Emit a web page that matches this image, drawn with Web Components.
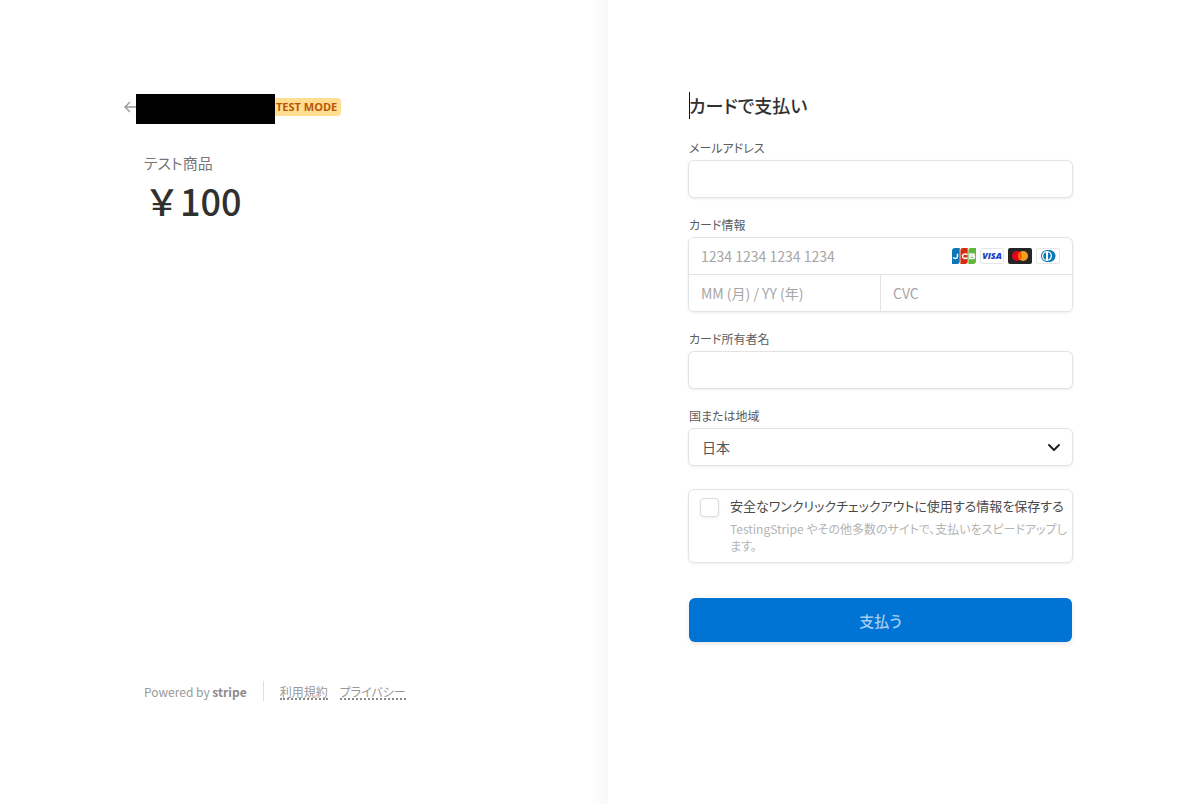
<!DOCTYPE html>
<html lang="ja">
<head>
<meta charset="utf-8">
<meta name="viewport" content="width=device-width, initial-scale=1">
<title>カードで支払い</title>
<style>
  body {
    margin: 0;
    background: #fff;
    color: #303030;
    font-family: "Noto Sans CJK JP", sans-serif;
    font-feature-settings: "palt";
    --line: #e3e3e3;
    --muted: #999;
    --label: #5c5c5c;
    --latin: "Open Sans", "Noto Sans CJK JP", sans-serif;
    --field-shadow: 0 1px 3px rgba(0, 0, 0, .08);
  }
</style>
</head>
<body>
<checkout-page>
  <order-summary slot="summary" product="テスト商品" price="￥100"></order-summary>
  <payment-form slot="payment">
    <text-field label="メールアドレス" type="email"></text-field>
    <card-field label="カード情報"></card-field>
    <text-field label="カード所有者名" type="text"></text-field>
    <country-field label="国または地域"></country-field>
    <save-info>
      安全なワンクリックチェックアウトに使用する情報を保存する
      <span slot="detail">TestingStripe やその他多数のサイトで、支払いをスピードアップします。</span>
    </save-info>
    <pay-button>支払う</pay-button>
  </payment-form>
</checkout-page>

<script>
const define = (name, render) => customElements.define(name, class extends HTMLElement {
  connectedCallback() {
    if (this.shadowRoot) return;
    const template = document.createElement('template');
    template.innerHTML = '<style>*{box-sizing:border-box}</style>' + render(this);
    this.attachShadow({ mode: 'open' }).append(template.content.cloneNode(true));
  }
});

define('checkout-page', () => `
  <style>
    :host { display: grid; grid-template-columns: 608fr 592fr; min-height: 100vh; }
    .left { display: flex; padding: 94px 84px 103px 144px; background: linear-gradient(to left, #f8f8f8, #fff 18px); }
    .right { padding: 92px 127px 80px 80px; }
    @media (max-width: 800px) {
      :host { grid-template-columns: 1fr; }
      .left, .right { padding: 32px; }
    }
  </style>
  <section class="left"><slot name="summary"></slot></section>
  <main class="right"><slot name="payment"></slot></main>`);

define('order-summary', el => `
  <style>
    :host { display: flex; flex-direction: column; flex: 1; }
    header { display: flex; align-items: center; height: 30px; margin-left: -20px; }
    .back { display: flex; color: #999; margin-bottom: 4px; }
    .name { width: 139px; height: 30px; background: #000; }
    .badge { font: 700 11px/18px var(--latin); color: #bb5504; background: #ffde92; border-radius: 0 4px 4px 0; padding: 0 4px 0 1px; margin-bottom: 4px; }
    .product { margin: 28px 0 0; font-size: 15px; line-height: 22px; font-weight: 400; color: #777; }
    .price { margin: 4px 0 0; font-size: 36px; line-height: 44px; font-weight: 500; color: #303030; font-feature-settings: normal; }
    site-footer { margin-top: auto; }
  </style>
  <header>
    <a class="back" href="#" aria-label="戻る"><svg width="12" height="12" viewBox="0 0 12 12" fill="none" stroke="currentColor" stroke-width="1.4"><path d="M12 6H1M6 1 1 6l5 5"/></svg></a>
    <div class="name"></div>
    <span class="badge">TEST MODE</span>
  </header>
  <h2 class="product">${el.getAttribute('product')}</h2>
  <p class="price">${el.getAttribute('price')}</p>
  <site-footer></site-footer>`);

define('site-footer', () => `
  <style>
    :host { display: flex; align-items: center; font-size: 12px; line-height: 18px; color: var(--muted); }
    .powered { color: var(--muted); text-decoration: none; padding: 2px 16px 0 0; border-right: 1px solid #e0e0e0; }
    b { font-weight: 700; color: #8c8c8c; }
    nav { display: flex; gap: 12px; margin-left: 16px; padding-top: 3px; }
    nav a { color: var(--muted); text-decoration: none; line-height: 12px; border-bottom: 2px dotted #888; }
  </style>
  <a class="powered" href="#">Powered by <b>stripe</b></a>
  <nav><a href="#">利用規約</a><a href="#">プライバシー</a></nav>`);

define('payment-form', () => `
  <style>
    :host { display: block; }
    h1 { display: flex; align-items: center; margin: 0 0 21px; padding-left: 1px; font-size: 18px; line-height: 27px; font-weight: 500; }
    h1::before { content: ""; width: 1px; height: 27px; margin-right: -1px; background: #111; }
    form { display: flex; flex-direction: column; gap: 19px; max-width: 640px; }
  </style>
  <h1>カードで支払い</h1>
  <form><slot></slot></form>`);

const labelCss = `
  label, legend { display: block; padding: 0 0 0 1px; margin: 0 0 4px; font-size: 12px; line-height: 16px; font-weight: 400; color: var(--label); }`;
const inputCss = `
  input { display: block; width: 100%; min-width: 0; height: 38px; padding: 0 12px; border: 1px solid var(--line); border-radius: 6px;
    background: #fff; box-shadow: var(--field-shadow); font: 14px "Noto Sans CJK JP", sans-serif; color: #303030; outline: none; }
  input::placeholder { color: #a6a6a6; opacity: 1; }`;

define('text-field', el => `
  <style>:host { display: block; } ${labelCss} ${inputCss}</style>
  <label for="field">${el.getAttribute('label')}</label>
  <input id="field" type="${el.getAttribute('type')}">`);

define('card-field', el => `
  <style>
    :host { display: block; } ${labelCss} ${inputCss}
    fieldset { border: 0; margin: 0; padding: 0; min-width: 0; }
    .box { border: 1px solid var(--line); border-radius: 6px; box-shadow: var(--field-shadow); overflow: hidden; }
    input { border: 0; border-radius: 0; box-shadow: none; height: 36px; }
    .row { display: flex; align-items: center; }
    .row + .row { border-top: 1px solid var(--line); }
    .row + .row input { flex: 1 1 0; }
    .row + .row input + input { border-left: 1px solid var(--line); }
    card-brands { flex: none; margin-right: 12px; }
  </style>
  <fieldset>
    <legend>${el.getAttribute('label')}</legend>
    <div class="box">
      <div class="row"><input aria-label="カード番号" placeholder="1234 1234 1234 1234"><card-brands></card-brands></div>
      <div class="row"><input aria-label="有効期限" placeholder="MM (月) / YY (年)"><input aria-label="セキュリティコード" placeholder="CVC"></div>
    </div>
  </fieldset>`);

define('card-brands', () => `
  <style>
    :host { display: flex; gap: 4px; }
    svg, .visa { width: 24px; height: 16px; display: block; }
    .visa { border: 1px solid #e6e6e6; border-radius: 2px; font: italic 800 9px/14px "Open Sans", sans-serif; color: #1a3fc4; text-align: center; }
  </style>
  <svg viewBox="0 0 24 16" role="img" aria-label="JCB">
    <path fill="#0e75b8" d="M3 0h5v13a3 3 0 0 1-3 3H0V3a3 3 0 0 1 3-3z"/>
    <path fill="#d82c10" d="M11 0h5v13a3 3 0 0 1-3 3H8V3a3 3 0 0 1 3-3z"/>
    <path fill="#62b63c" d="M19 0h5v13a3 3 0 0 1-3 3h-5V3a3 3 0 0 1 3-3z"/>
    <path stroke="#fff" stroke-width=".7" d="M8.1 0v16M16.1 0v16"/>
    <path fill="none" stroke="#fff" stroke-width="1.5" d="M1 9.500c2 1.500 4.500 1.200 4.500-1V5.800M15.500 6.500c-2.500-1-5-.6-5 1.700s2.500 2.700 5 1.700M18 6h3c1.700 0 1.700 2 0 2h-3h3.200c1.800 0 1.800 2.400 0 2.400H18z"/>
  </svg>
  <span class="visa">VISA</span>
  <svg viewBox="0 0 24 16" role="img" aria-label="Mastercard">
    <rect width="24" height="16" rx="2" fill="#252525"/>
    <circle cx="9" cy="8" r="5" fill="#eb001b"/><circle cx="15" cy="8" r="5" fill="#f79e1b"/>
    <path fill="#ff5f00" d="M12 4a5 5 0 0 1 0 8 5 5 0 0 1 0-8z"/>
  </svg>
  <svg viewBox="0 0 24 16" role="img" aria-label="Diners Club">
    <rect x=".5" y=".5" width="23" height="15" rx="2" fill="#fff" stroke="#e6e6e6"/>
    <path fill="#0b78b6" d="M11 2h2.500a6 6 0 0 1 0 12H11a6 6 0 0 1 0-12z"/>
    <circle cx="11" cy="8" r="5" fill="#fff"/>
    <path fill="#0b78b6" d="M10 4.200v7.600a4 4 0 0 1 0-7.600zM12 4.200v7.600a4 4 0 0 0 0-7.600z"/>
  </svg>`);

define('country-field', el => `
  <style>
    :host { display: block; } ${labelCss}
    .box { display: grid; align-items: center; }
    .box > * { grid-area: 1 / 1; }
    select { appearance: none; width: 100%; height: 38px; padding: 0 36px 0 13px; border: 1px solid var(--line); border-radius: 6px;
      background: #fff; box-shadow: var(--field-shadow); font: 14px "Noto Sans CJK JP", sans-serif; color: #555; }
    svg { justify-self: end; margin-right: 13px; pointer-events: none; }
  </style>
  <label for="country">${el.getAttribute('label')}</label>
  <div class="box">
    <select id="country"><option>日本</option></select>
    <svg width="12" height="12" viewBox="0 0 12 12" fill="none" stroke="#1a1a1a" stroke-width="1.8" stroke-linecap="round" stroke-linejoin="round"><path d="m1 4 5 5 5-5"/></svg>
  </div>`);

define('save-info', () => `
  <style>
    :host { display: block; margin-top: 4px; }
    .box { display: flex; gap: 11px; padding: 8px 2px 8px 11px; border: 1px solid var(--line); border-radius: 6px; box-shadow: var(--field-shadow); }
    input { appearance: none; flex: none; width: 19px; height: 19px; margin: 0; border: 1px solid #ddd; border-radius: 4px; background: #fff; box-shadow: var(--field-shadow); }
    label { display: block; font-size: 13px; line-height: 16px; color: #4a4a4a; }
    p { margin: 6px 0 0; font-size: 12px; line-height: 17px; color: #b4b4b4; }
  </style>
  <div class="box">
    <input type="checkbox" id="save">
    <div><label for="save"><slot></slot></label><p><slot name="detail"></slot></p></div>
  </div>`);

define('pay-button', () => `
  <style>
    :host { display: block; margin: 16px 1px 0; }
    button { display: block; width: 100%; height: 44px; border: 0; border-radius: 6px; background: #0074d4; color: #a3cdf0;
      font: 500 15px "Noto Sans CJK JP", sans-serif; font-feature-settings: "palt"; box-shadow: 0 2px 4px rgba(0, 0, 0, .1); }
  </style>
  <button type="button"><slot></slot></button>`);
</script>
</body>
</html>
